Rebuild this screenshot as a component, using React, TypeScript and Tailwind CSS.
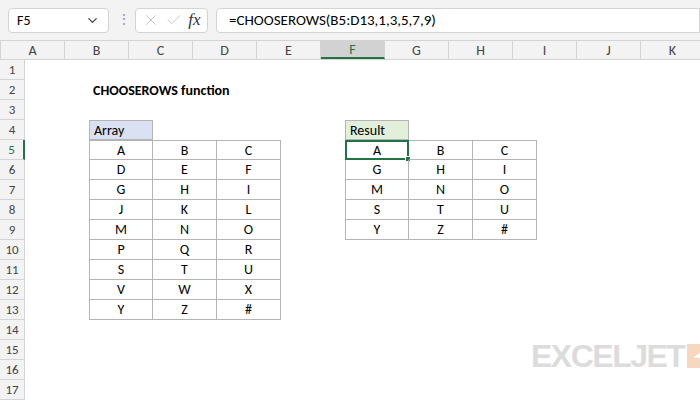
import { ChevronDown, X, Check } from 'lucide-react';

const cols = ['A', 'B', 'C', 'D', 'E', 'F', 'G', 'H', 'I', 'J', 'K'];
const arr = [
  ['A', 'B', 'C'], ['D', 'E', 'F'], ['G', 'H', 'I'], ['J', 'K', 'L'], ['M', 'N', 'O'],
  ['P', 'Q', 'R'], ['S', 'T', 'U'], ['V', 'W', 'X'], ['Y', 'Z', '#'],
];
const res = [arr[0], arr[2], arr[4], arr[6], arr[8]];

function cell(r: number, c: number) {
  if (r === 2 && c === 1) return { text: 'CHOOSEROWS function', cls: 'font-bold pl-1 overflow-visible whitespace-nowrap z-10' };
  if (r === 4 && c === 1) return { text: 'Array', cls: 'bg-[#d9e1f2] border border-[#b4b4b4] pl-1' };
  if (r === 4 && c === 5) return { text: 'Result', cls: 'bg-[#e2efda] border border-[#b4b4b4] pl-1' };
  if (r >= 5 && r <= 13 && c >= 1 && c <= 3)
    return { text: arr[r - 5][c - 1], cls: 'border-r border-b border-[#b4b4b4] justify-center ' + (c === 1 ? 'border-l ' : '') + (r === 5 ? 'border-t' : '') };
  if (r >= 5 && r <= 9 && c >= 5 && c <= 7)
    return { text: res[r - 5][c - 5], cls: 'border-r border-b border-[#b4b4b4] justify-center ' + (c === 5 ? 'border-l ' : '') + (r === 5 ? 'border-t' : '') };
  return { text: '', cls: '' };
}

export default function App() {
  const rows = Array.from({ length: 17 }, (_, i) => i + 1);
  return (
    <div className="w-[700px] h-[400px] overflow-hidden bg-white relative text-[14px] text-black" style={{ fontFamily: 'Calibri, "Open Sans", "Liberation Sans", Arial, sans-serif' }}>
      <div className="h-[41px] bg-[#f3f3f3] flex items-center px-2 gap-2 border-b border-[#d4d4d4]">
        <div className="w-[101px] h-[25px] bg-white border border-[#d4d4d4] rounded flex items-center justify-between px-2 text-[14px]">
          <span>F5</span>
          <ChevronDown size={15} className="text-[#444]" />
        </div>
        <div className="text-[#999] text-[14px] w-[10px] text-center leading-none">⋮</div>
        <div className="w-[73px] h-[25px] bg-white border border-[#d4d4d4] rounded flex items-center justify-around px-1">
          <X size={18} className="text-[#c4c4c4]" strokeWidth={1.3} />
          <Check size={18} className="text-[#c4c4c4]" strokeWidth={1.3} />
          <span className="italic text-[17px] text-[#333]" style={{ fontFamily: '"Liberation Serif", serif' }}>fx</span>
        </div>
        <div className="flex-1 h-[25px] bg-white border border-[#d4d4d4] rounded-l flex items-center pl-3 text-[15px] mr-[-8px]">
          =CHOOSEROWS(B5:D13,1,3,5,7,9)
        </div>
      </div>
      <div className="flex h-[19px] bg-[#f3f3f3] border-b border-[#d4d4d4]">
        <div className="w-[25px] border-r border-[#d4d4d4] relative">
          <div className="absolute right-[2px] bottom-[2px] w-0 h-0 border-l-[10px] border-l-transparent border-b-[10px] border-b-[#c8c8c8]" />
        </div>
        {cols.map((c) => (
          <div key={c} className={`shrink-0 w-[64px] border-r border-[#d4d4d4] flex items-center justify-center text-[#444] ${c === 'F' ? 'bg-[#d2d2d2] border-b-2 border-b-[#217346] text-[#217346]' : ''}`}>{c}</div>
        ))}
      </div>
      {rows.map((r) => (
        <div key={r} className="flex h-[20px]">
          <div className={`w-[25px] shrink-0 flex items-center justify-center bg-[#f3f3f3] border-r border-b border-[#d4d4d4] text-[#444] text-[13px] ${r === 5 ? 'bg-[#d2d2d2] border-r-2 border-r-[#217346] text-[#217346]' : ''}`}>{r}</div>
          {cols.map((c, i) => {
            const { text, cls } = cell(r, i);
            const sel = r === 5 && i === 5;
            return (
              <div key={c} className={`shrink-0 w-[64px] flex items-center relative ${cls}`}>
                {text}
                {sel && (
                  <div className="absolute inset-[-1px] border-2 border-[#217346] pointer-events-none">
                    <div className="absolute right-[-4px] bottom-[-4px] w-[6px] h-[6px] bg-[#217346] border border-white" />
                  </div>
                )}
              </div>
            );
          })}
        </div>
      ))}
      <div className="absolute left-[531px] top-[340px] flex items-center gap-[3px]">
        <span className="text-[32px] font-black tracking-[-1.5px] text-[#dcdcdc] leading-none" style={{ fontFamily: '"Liberation Sans", Arial, sans-serif' }}>EXCELJET</span>
        <div className="w-[24px] h-[24px] bg-[#f7d7bf] flex items-center justify-center">
          <svg width="16" height="16" viewBox="0 0 14 14"><path d="M12 2 L2 8 L9 9 Z" fill="white" /></svg>
        </div>
      </div>
    </div>
  );
}
